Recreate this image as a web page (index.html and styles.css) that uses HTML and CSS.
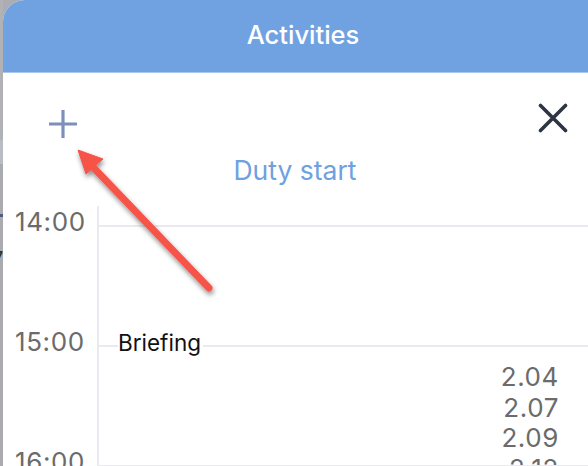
FILE: index.html
```html
<!DOCTYPE html>
<html lang="en">
<head>
<meta charset="utf-8">
<title>Activities</title>
<link rel="stylesheet" href="styles.css">
</head>
<body>
<div class="backdrop">
  <div class="bd-top"></div>
  <div class="bd-light"></div>
  <div class="bd-gap1"></div>
  <div class="bd-dark"></div>
  <div class="bd-gap2"></div>
  <div class="bd-glyph">7</div>
  <div class="bd-gap3"></div>
  <div class="bd-glyph">r</div>
</div>
<div class="modal">
  <header class="header">Activities</header>
  <div class="toolbar">
    <button class="icon-btn add" aria-label="Add">
      <svg width="30" height="30" viewBox="0 0 30 30"><path d="M15 1V29M1 15H29" stroke="#7d8fba" stroke-width="3.2" fill="none"/></svg>
    </button>
    <button class="icon-btn close" aria-label="Close">
      <svg width="30" height="30" viewBox="0 0 30 30"><path d="M2.5 2.5L27.5 27.5M27.5 2.5L2.5 27.5" stroke="#2d3542" stroke-width="3.6" stroke-linecap="round" fill="none"/></svg>
    </button>
  </div>
  <div class="duty">Duty start</div>
  <div class="timeline">
    <div class="row lead">
      <div class="label"></div>
      <div class="track"></div>
    </div>
    <div class="row hour">
      <div class="label"><span>14:00</span></div>
      <div class="track">
        <div class="event briefing">Briefing</div>
      </div>
    </div>
    <div class="row hour">
      <div class="label"><span>15:00</span></div>
      <div class="track">
        <ul class="values">
          <li>2.04</li>
          <li>2.07</li>
          <li>2.09</li>
          <li>2.12</li>
        </ul>
      </div>
    </div>
    <div class="row hour">
      <div class="label"><span>16:00</span></div>
      <div class="track"></div>
    </div>
  </div>
</div>
<svg class="arrow" width="588" height="466" viewBox="0 0 588 466">
  <defs>
    <filter id="sh" x="-20%" y="-20%" width="140%" height="140%">
      <feDropShadow dx="1" dy="3" stdDeviation="2.5" flood-color="#000" flood-opacity="0.45"/>
    </filter>
  </defs>
  <g filter="url(#sh)" fill="#f65349" stroke="#f65349">
    <path d="M209 288L91 165" stroke-width="7" stroke-linecap="round" fill="none"/>
    <path d="M78 150L103 159L86 174Z" stroke-width="1" stroke-linejoin="round"/>
  </g>
</svg>
</body>
</html>
```
FILE: styles.css
```css
* { box-sizing: border-box; }
html, body { margin: 0; padding: 0; }
body {
  width: 588px;
  height: 466px;
  overflow: hidden;
  display: flex;
  background: #abadb2;
  font-family: Inter, "Noto Sans", "Liberation Sans", sans-serif;
}
.backdrop {
  flex: 0 0 3px;
  display: flex;
  flex-direction: column;
  overflow: hidden;
  background: #a9abae;
}
.bd-top { height: 140px; background: #b0b2b6; }
.bd-light { height: 24px; background: #b9bcc4; }
.bd-gap1 { height: 50px; }
.bd-dark { height: 3px; background: #4d5b7c; }
.bd-gap2 { height: 32px; }
.bd-glyph {
  height: 20px;
  font-size: 20px;
  line-height: 20px;
  color: #333;
  margin-left: -8px;
}
.bd-gap3 { height: 60px; }
.modal {
  flex: 0 0 600px;
  height: 466px;
  background: #fff;
  border-top-left-radius: 22px;
  overflow: hidden;
  display: flex;
  flex-direction: column;
}
.header {
  height: 73px;
  flex: 0 0 73px;
  background: #70a2e2;
  border-bottom: 1px solid #a9c8f0;
  color: #fff;
  font-size: 25.5px;
  font-weight: 500;
  display: flex;
  align-items: center;
  justify-content: center;
  padding-bottom: 4px;
}
.toolbar {
  display: flex;
  justify-content: space-between;
  align-items: flex-start;
  padding: 30px 35px 0 45px;
}
.icon-btn {
  border: 0;
  padding: 0;
  background: none;
  width: 30px;
  height: 30px;
  display: block;
}
.icon-btn svg { display: block; }
.add { margin-top: 6px; }
.duty {
  margin-top: 16px;
  padding-right: 16px;
  text-align: center;
  color: #6fa0e0;
  font-size: 26.5px;
  line-height: 30px;
}
.timeline {
  margin-top: 21px;
  display: flex;
  flex-direction: column;
}
.row { display: flex; }
.row.lead { height: 19px; }
.row.hour { height: 120px; }
.label {
  flex: 0 0 94px;
  padding-left: 12px;
}
.label span {
  display: block;
  margin-top: -17px;
  font-size: 26px;
  letter-spacing: 0.6px;
  line-height: 28px;
  color: #6b6b6b;
}
.track {
  flex: 1;
  position: relative;
  border-left: 2px solid #e9e9ef;
}
.row.hour .track { border-top: 2px solid #e9e9ef; }
.event {
  position: absolute;
  z-index: 2;
  left: 19px;
  bottom: -10px;
  font-size: 22.5px;
  line-height: 24px;
  color: #111;
  background: #fff;
  padding-right: 2px;
}
.values {
  list-style: none;
  margin: 0;
  padding: 15px 44px 0 0;
  display: flex;
  flex-direction: column;
  align-items: flex-end;
}
.values li {
  font-size: 26px;
  letter-spacing: 0.6px;
  line-height: 30.5px;
  color: #6b6b6b;
}
.arrow {
  position: absolute;
  z-index: 5;
  left: 0;
  top: 0;
  pointer-events: none;
}
```
